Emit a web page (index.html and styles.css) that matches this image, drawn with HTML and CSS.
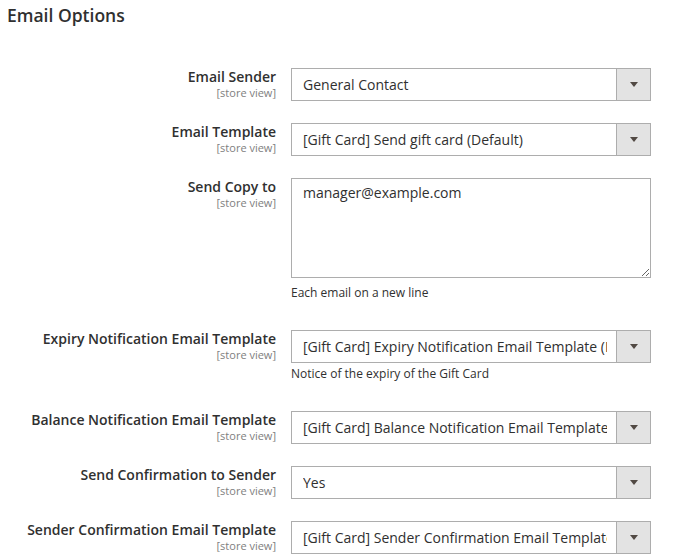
FILE: index.html
```html
<!DOCTYPE html>
<html lang="en">

<head>
    <meta charset="UTF-8">
    <meta name="viewport" content="width=device-width, initial-scale=1.0">
    <title>Email Options</title>
    <link rel="stylesheet" href="styles.css">
</head>

<body>
    <div class="section">
        <h2 class="section-title">Email Options</h2>
        <div class="fields">
            <div class="field">
                <div class="field-label">
                    <label for="sender">Email Sender</label>
                    <span class="scope">[store view]</span>
                </div>
                <div class="field-control">
                    <div class="select">
                        <select id="sender">
                            <option>General Contact</option>
                        </select>
                        <span class="select-arrow"></span>
                    </div>
                </div>
            </div>
            <div class="field">
                <div class="field-label">
                    <label for="template">Email Template</label>
                    <span class="scope">[store view]</span>
                </div>
                <div class="field-control">
                    <div class="select">
                        <select id="template">
                            <option>[Gift Card] Send gift card (Default)</option>
                        </select>
                        <span class="select-arrow"></span>
                    </div>
                </div>
            </div>
            <div class="field">
                <div class="field-label">
                    <label for="copy">Send Copy to</label>
                    <span class="scope">[store view]</span>
                </div>
                <div class="field-control">
                    <textarea id="copy" class="textarea">manager@example.com</textarea>
                    <div class="note">Each email on a new line</div>
                </div>
            </div>
            <div class="field">
                <div class="field-label">
                    <label for="expiry">Expiry Notification Email Template</label>
                    <span class="scope">[store view]</span>
                </div>
                <div class="field-control">
                    <div class="select">
                        <select id="expiry">
                            <option>[Gift Card] Expiry Notification Email Template (Default)</option>
                        </select>
                        <span class="select-arrow"></span>
                    </div>
                    <div class="note">Notice of the expiry of the Gift Card</div>
                </div>
            </div>
            <div class="field">
                <div class="field-label">
                    <label for="balance">Balance Notification Email Template</label>
                    <span class="scope">[store view]</span>
                </div>
                <div class="field-control">
                    <div class="select">
                        <select id="balance">
                            <option>[Gift Card] Balance Notification Email Template (Default)</option>
                        </select>
                        <span class="select-arrow"></span>
                    </div>
                </div>
            </div>
            <div class="field">
                <div class="field-label">
                    <label for="confirm">Send Confirmation to Sender</label>
                    <span class="scope">[store view]</span>
                </div>
                <div class="field-control">
                    <div class="select">
                        <select id="confirm">
                            <option>Yes</option>
                            <option>No</option>
                        </select>
                        <span class="select-arrow"></span>
                    </div>
                </div>
            </div>
            <div class="field">
                <div class="field-label">
                    <label for="confirm-template">Sender Confirmation Email Template</label>
                    <span class="scope">[store view]</span>
                </div>
                <div class="field-control">
                    <div class="select">
                        <select id="confirm-template">
                            <option>[Gift Card] Sender Confirmation Email Template (Default)</option>
                        </select>
                        <span class="select-arrow"></span>
                    </div>
                </div>
            </div>
        </div>
    </div>
</body>

</html>
```

FILE: styles.css
```css
body {
    margin: 0;
    background-color: #fff;
    font-family: "Open Sans", "DejaVu Sans", sans-serif;
    color: #303030;
}

.section {
    padding: 5px 0 0 7px;
}

.section-title {
    margin: 0;
    font-size: 17.5px;
    font-weight: 600;
    line-height: 20px;
    color: #303030;
}

.fields {
    display: flex;
    flex-direction: column;
    gap: 22px;
    margin-top: 43px;
}

.field {
    display: grid;
    grid-template-columns: 269px 360px;
    column-gap: 15px;
}

.field-label {
    display: flex;
    flex-direction: column;
    align-items: flex-end;
    text-align: right;
}

.field-label>label {
    font-size: 14px;
    font-weight: 600;
    line-height: 18px;
}

.scope {
    font-size: 11px;
    line-height: 13px;
    color: #808080;
}

.select {
    position: relative;
    height: 33px;
}

.select>select {
    display: block;
    width: 100%;
    height: 33px;
    margin: 0;
    padding: 0 43px 0 11px;
    border: 1px solid #adadad;
    border-radius: 0;
    background-color: #fff;
    font-family: inherit;
    font-size: 14px;
    color: #303030;
    appearance: none;
    -webkit-appearance: none;
    box-sizing: border-box;
}

.select-arrow {
    position: absolute;
    top: 1px;
    right: 1px;
    bottom: 1px;
    width: 33px;
    border-left: 1px solid #adadad;
    background-color: #e3e3e3;
    pointer-events: none;
    display: flex;
    align-items: center;
    justify-content: center;
}

.select-arrow::after {
    content: "";
    border-left: 4px solid transparent;
    border-right: 4px solid transparent;
    border-top: 5px solid #514943;
}

.textarea {
    display: block;
    width: 100%;
    height: 100px;
    margin: 0 0 6px;
    padding: 4px 11px;
    border: 1px solid #adadad;
    border-radius: 0;
    font-family: inherit;
    font-size: 14px;
    line-height: 19px;
    color: #303030;
    box-sizing: border-box;
}

.note {
    margin: 2px 0 6px;
    font-size: 12px;
    line-height: 18px;
    color: #303030;
}
```
